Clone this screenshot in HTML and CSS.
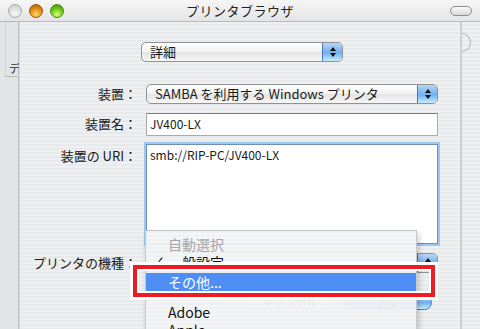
FILE: index.html
```html
<!DOCTYPE html>
<html lang="ja">
<head>
  <meta charset="UTF-8">
  <title>プリンタブラウザ</title>
  <link rel="stylesheet" href="styles.css">
</head>
<body>
  <div class="window">
    <div class="titlebar">
      <div class="lights">
        <span class="light gray"></span>
        <span class="light orange"></span>
        <span class="light green"></span>
      </div>
      <div class="title">プリンタブラウザ</div>
      <span class="pill"></span>
    </div>

    <div class="content">
      <div class="back-left">
        <div class="back-tool"><span>デ</span></div>
      </div>

      <div class="sheet">
        <div class="top-row">
          <div class="popup mode">
            <span class="popup-label">詳細</span>
            <span class="popup-arrows"><svg width="8" height="12" viewBox="0 0 8 12"><path d="M4 1 L7 5 L1 5 Z M4 11 L7 7 L1 7 Z" fill="#111"/></svg></span>
          </div>
        </div>

        <div class="form">
          <div class="label mid">装置：</div>
          <div class="popup">
            <span class="popup-label">SAMBA を利用する Windows プリンタ</span>
            <span class="popup-arrows"><svg width="8" height="12" viewBox="0 0 8 12"><path d="M4 1 L7 5 L1 5 Z M4 11 L7 7 L1 7 Z" fill="#111"/></svg></span>
          </div>

          <div class="label">装置名：</div>
          <div class="field">JV400-LX</div>

          <div class="label">装置の URI：</div>
          <div class="field area">smb://RIP-PC/JV400-LX</div>

          <div class="label mid">プリンタの機種：</div>
          <div class="popup">
            <span class="popup-label"></span>
            <span class="popup-arrows"><svg width="8" height="12" viewBox="0 0 8 12"><path d="M4 1 L7 5 L1 5 Z M4 11 L7 7 L1 7 Z" fill="#111"/></svg></span>
          </div>
        </div>

        <div class="buttons">
          <span class="button">キャンセル</span>
          <span class="button default">追加</span>
        </div>
      </div>

      <div class="back-right">
        <span class="back-circle"></span>
      </div>
    </div>

    <div class="menu">
      <div class="item disabled">自動選択</div>
      <div class="item"><span class="check">✓</span>一般設定</div>
      <div class="separator small"></div>
      <div class="item selected">その他...</div>
      <div class="separator"></div>
      <div class="item">Adobe</div>
      <div class="item">Apple</div>
    </div>

    <div class="callout"></div>
  </div>
</body>
</html>
```

FILE: styles.css
```css
body {
  margin: 0;
  font-family: "Noto Sans CJK JP", "Noto Sans", sans-serif;
  font-size: 13px;
  color: #1a1a1a;
  background: #e9ebec;
}

.window {
  position: relative;
  width: 480px;
  height: 329px;
  overflow: hidden;
  display: flex;
  flex-direction: column;
}

/* title bar */
.titlebar {
  height: 22px;
  flex: none;
  display: flex;
  align-items: center;
  position: relative;
  background: linear-gradient(#f6f6f6, #e4e4e4);
  border-bottom: 1px solid #b9b9b9;
  box-sizing: border-box;
}
.lights {
  display: flex;
  gap: 7px;
  padding-left: 8px;
}
.light {
  width: 14px;
  height: 14px;
  border-radius: 50%;
  box-sizing: border-box;
  border: 1px solid rgba(0, 0, 0, 0.35);
}
.light.gray {
  background: radial-gradient(circle at 50% 75%, #f7f7f7, #d6d6d6 70%);
  border-color: #aaaaaa;
}
.light.orange {
  background: radial-gradient(circle at 50% 80%, #ffd66a, #e08a10 55%, #a85a00);
  border-color: #9a5a10;
}
.light.green {
  background: radial-gradient(circle at 50% 80%, #d8ff7a, #68c418 55%, #3f8a06);
  border-color: #4a8a12;
}
.title {
  position: absolute;
  left: 0;
  right: 0;
  text-align: center;
  font-size: 13px;
  color: #222;
  letter-spacing: 0.5px;
  pointer-events: none;
}
.pill {
  margin-left: auto;
  margin-right: 8px;
  width: 20px;
  height: 8px;
  border: 1px solid #8c8c8c;
  border-radius: 5px;
  background: linear-gradient(#fafafa, #d8d8d8);
}

/* body */
.content {
  flex: 1;
  display: flex;
  min-height: 0;
}
.back-left {
  width: 18px;
  flex: none;
  background: #e2e4e5;
  border-right: 1px solid #bfc2c4;
}
.back-tool {
  height: 54px;
  border-left: 1px solid #cfd2d3;
  margin-left: 5px;
  border-bottom: 1px solid #b9bcbe;
  display: flex;
  align-items: flex-end;
  font-size: 11px;
  color: #333;
  padding-left: 3px;
}
.back-right {
  width: 18px;
  flex: none;
  position: relative;
  overflow: hidden;
  background: repeating-linear-gradient(#eef0f1 0 2px, #e6e8e9 2px 4px);
  border-left: 1px solid #c9cccd;
}
.back-circle {
  position: absolute;
  left: -9px;
  top: 11px;
  width: 16px;
  height: 17px;
  border: 1px solid #b4b7b9;
  border-radius: 50%;
}

.sheet {
  flex: 1;
  background: repeating-linear-gradient(#edeff0 0 2px, #e7e9ea 2px 4px);
  box-shadow: inset 1px 0 0 #d6d8d9, inset -1px 0 0 #cfd1d2;
  display: flex;
  flex-direction: column;
  padding-top: 20px;
}

.top-row {
  display: flex;
  padding-left: 122px;
  margin-bottom: 22px;
}
.popup.mode {
  width: 202px;
}

/* pop-up buttons */
.popup {
  height: 20px;
  box-sizing: border-box;
  display: flex;
  align-items: center;
  border: 1px solid #8f9294;
  border-radius: 5px;
  background: linear-gradient(#ffffff, #f2f2f2 50%, #e4e4e4 51%, #f6f6f6);
  overflow: hidden;
}
.popup-label {
  flex: 1;
  padding-left: 8px;
  white-space: nowrap;
  font-size: 13px;
  line-height: 18px;
}
.popup-arrows {
  width: 19px;
  height: 100%;
  display: flex;
  align-items: center;
  justify-content: center;
  background: linear-gradient(#b7d6f6, #7db4ee 45%, #6fb0f2 55%, #c9ecfd);
  border-left: 1px solid #4a78c0;
}

/* form */
.form {
  display: grid;
  grid-template-columns: 118px 292px;
  column-gap: 9px;
  row-gap: 9px;
}
.label {
  text-align: right;
  white-space: nowrap;
  padding-top: 3px;
  line-height: 16px;
}
.label.mid {
  align-self: center;
  padding-top: 0;
}
.field {
  height: 23px;
  box-sizing: border-box;
  background: #fff;
  border: 1px solid #a9acad;
  border-top-color: #7b7e80;
  padding: 1px 3px;
  font-size: 12px;
  line-height: 18px;
}
.field.area {
  height: 100px;
  border: 1px solid #6f8fb0;
  box-shadow: 0 0 0 2px #9cc8ef;
  margin-top: -1px;
}

.buttons {
  display: flex;
  justify-content: flex-end;
  gap: 10px;
  padding: 22px 29px 0 0;
}
.button {
  width: 86px;
  height: 13px;
  border: 1px solid #a9abad;
  border-radius: 8px;
  text-align: center;
  line-height: 13px;
  font-size: 11px;
  background: #f4f4f4;
}
.button.default {
  background: linear-gradient(#b7d6f6, #6fb0f2 50%, #c9ecfd);
  border-color: #4a78c0;
}

/* open menu */
.menu {
  position: absolute;
  left: 145px;
  top: 230px;
  width: 272px;
  height: 110px;
  padding-top: 4px;
  box-sizing: border-box;
  background: repeating-linear-gradient(rgba(238, 240, 241, 0.95) 0 2px, rgba(244, 245, 246, 0.95) 2px 4px);
  border: 1px solid #c6c9cb;
  box-shadow: 2px 3px 6px rgba(0, 0, 0, 0.2);
  font-size: 14px;
}
.item {
  height: 18px;
  line-height: 18px;
  padding-left: 22px;
  position: relative;
  color: #111;
}
.item.disabled {
  color: #a3a6a8;
}
.item.selected {
  height: 19px;
  line-height: 19px;
  background: #4f8ff5;
  color: #fff;
}
.check {
  position: absolute;
  left: 7px;
}
.separator {
  height: 11px;
}
.separator.small {
  height: 2px;
}

/* red highlight around the chosen item */
.callout {
  position: absolute;
  left: 133px;
  top: 265px;
  width: 302px;
  height: 32px;
  box-sizing: border-box;
  border: 4px solid #ec1c24;
  box-shadow: 0 0 0 3px #fff, inset 0 0 0 2px #fff;
}
```
